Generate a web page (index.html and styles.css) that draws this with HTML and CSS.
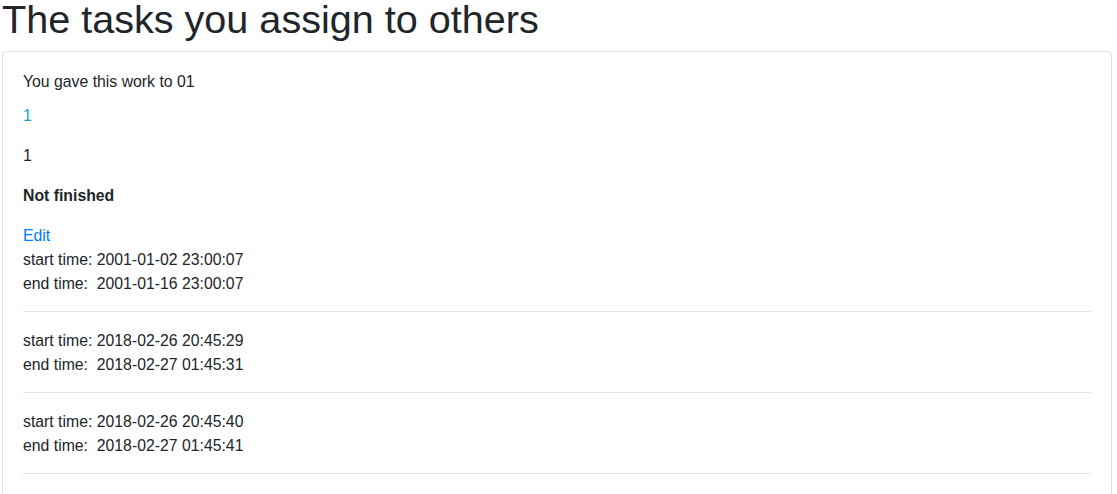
FILE: index.html
```html
<!DOCTYPE html>
<html lang="en">
<head>
<meta charset="utf-8">
<title>Tasks</title>
<link rel="stylesheet" href="styles.css">
</head>
<body>
<div class="page">
  <h1 class="title">The tasks you assign to others</h1>
  <div class="card">
    <div class="card-body">
      <p class="lead-line">You gave this work to 01</p>
      <p class="para info">1</p>
      <p class="para">1</p>
      <p class="para bold">Not finished</p>
      <a class="link" href="#">Edit</a>
      <div class="times">
        <div>start time: 2001-01-02 23:00:07</div>
        <div>end time:&nbsp; 2001-01-16 23:00:07</div>
      </div>
      <hr class="rule">
      <div class="times">
        <div>start time: 2018-02-26 20:45:29</div>
        <div>end time:&nbsp; 2018-02-27 01:45:31</div>
      </div>
      <hr class="rule">
      <div class="times">
        <div>start time: 2018-02-26 20:45:40</div>
        <div>end time:&nbsp; 2018-02-27 01:45:41</div>
      </div>
      <hr class="rule">
    </div>
  </div>
</div>
</body>
</html>
```
FILE: styles.css
```css
html, body {
  margin: 0;
  padding: 0;
  background: #fff;
}
body {
  font-family: "Liberation Sans", Arial, sans-serif;
  font-size: 15.8px;
  line-height: 24px;
  color: #212529;
}
.page {
  padding: 0 5px 0 2px;
}
.title {
  font-size: 39.6px;
  font-weight: 400;
  line-height: 48px;
  margin: -5px 0 8px;
}
.card {
  border: 1px solid rgba(0, 0, 0, 0.125);
  border-radius: 4px;
}
.card-body {
  padding: 20px;
}
.lead-line {
  margin: 0 0 13px;
  line-height: 19px;
}
.para {
  margin: 0 0 16px;
}
.info {
  color: #17a2b8;
}
.bold {
  font-weight: 700;
}
.link {
  display: block;
  color: #007bff;
  text-decoration: none;
}
.rule {
  margin: 15px 0 17px;
  border: 0;
  border-top: 1px solid rgba(0, 0, 0, 0.1);
  height: 0;
}
```
